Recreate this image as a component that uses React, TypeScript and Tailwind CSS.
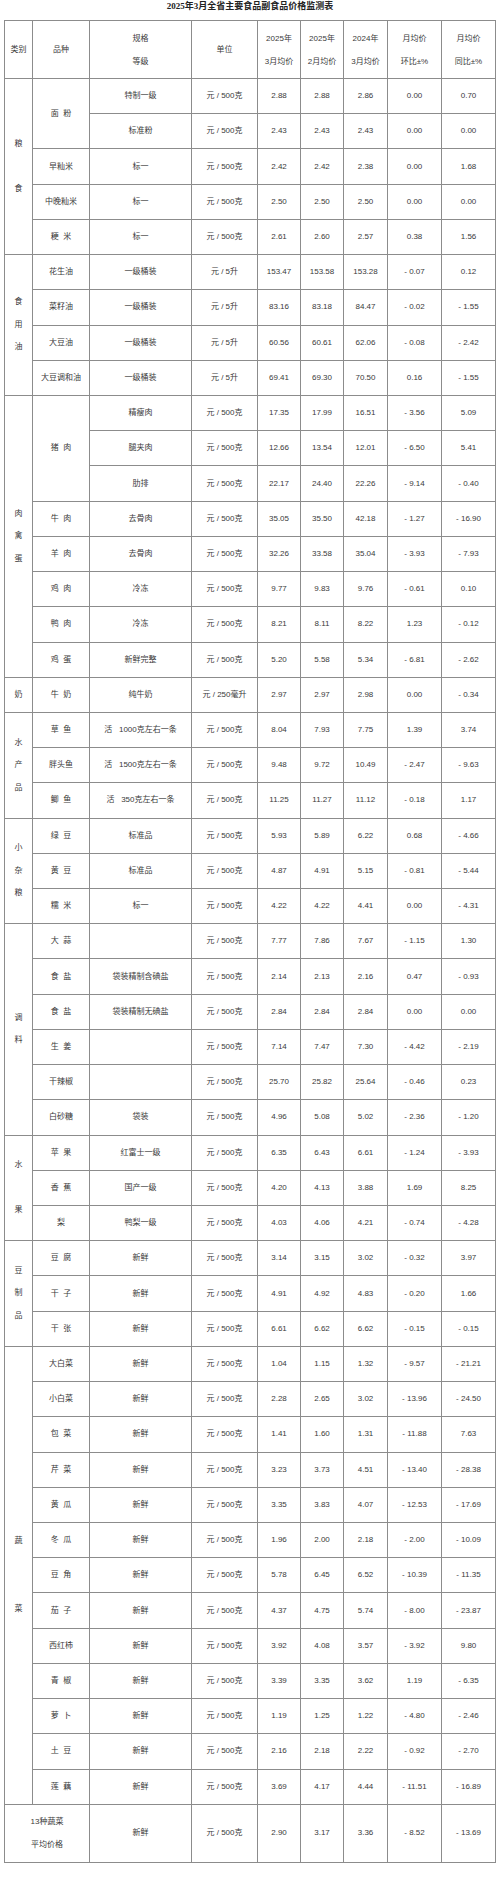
type Row = string[];

interface Item {
  name: string;
  rows: Row[];
}

interface Group {
  cat: string[];
  items: Item[];
}

const U = '元 / 500克';
const OIL = '元 / 5升';

const groups: Group[] = [
  {
    cat: ['粮', '', '食'],
    items: [
      {
        name: '面  粉',
        rows: [
          ['特制一级', U, '2.88', '2.88', '2.86', '0.00', '0.70'],
          ['标准粉', U, '2.43', '2.43', '2.43', '0.00', '0.00'],
        ],
      },
      { name: '早籼米', rows: [['标一', U, '2.42', '2.42', '2.38', '0.00', '1.68']] },
      { name: '中晚籼米', rows: [['标一', U, '2.50', '2.50', '2.50', '0.00', '0.00']] },
      { name: '粳  米', rows: [['标一', U, '2.61', '2.60', '2.57', '0.38', '1.56']] },
    ],
  },
  {
    cat: ['食', '用', '油'],
    items: [
      { name: '花生油', rows: [['一级桶装', OIL, '153.47', '153.58', '153.28', '- 0.07', '0.12']] },
      { name: '菜籽油', rows: [['一级桶装', OIL, '83.16', '83.18', '84.47', '- 0.02', '- 1.55']] },
      { name: '大豆油', rows: [['一级桶装', OIL, '60.56', '60.61', '62.06', '- 0.08', '- 2.42']] },
      { name: '大豆调和油', rows: [['一级桶装', OIL, '69.41', '69.30', '70.50', '0.16', '- 1.55']] },
    ],
  },
  {
    cat: ['肉', '禽', '蛋'],
    items: [
      {
        name: '猪  肉',
        rows: [
          ['精瘦肉', U, '17.35', '17.99', '16.51', '- 3.56', '5.09'],
          ['腿夹肉', U, '12.66', '13.54', '12.01', '- 6.50', '5.41'],
          ['肋排', U, '22.17', '24.40', '22.26', '- 9.14', '- 0.40'],
        ],
      },
      { name: '牛  肉', rows: [['去骨肉', U, '35.05', '35.50', '42.18', '- 1.27', '- 16.90']] },
      { name: '羊  肉', rows: [['去骨肉', U, '32.26', '33.58', '35.04', '- 3.93', '- 7.93']] },
      { name: '鸡  肉', rows: [['冷冻', U, '9.77', '9.83', '9.76', '- 0.61', '0.10']] },
      { name: '鸭  肉', rows: [['冷冻', U, '8.21', '8.11', '8.22', '1.23', '- 0.12']] },
      { name: '鸡  蛋', rows: [['新鲜完整', U, '5.20', '5.58', '5.34', '- 6.81', '- 2.62']] },
    ],
  },
  {
    cat: ['奶'],
    items: [{ name: '牛  奶', rows: [['纯牛奶', '元 / 250毫升', '2.97', '2.97', '2.98', '0.00', '- 0.34']] }],
  },
  {
    cat: ['水', '产', '品'],
    items: [
      { name: '草  鱼', rows: [['活   1000克左右一条', U, '8.04', '7.93', '7.75', '1.39', '3.74']] },
      { name: '胖头鱼', rows: [['活   1500克左右一条', U, '9.48', '9.72', '10.49', '- 2.47', '- 9.63']] },
      { name: '鲫  鱼', rows: [['活   350克左右一条', U, '11.25', '11.27', '11.12', '- 0.18', '1.17']] },
    ],
  },
  {
    cat: ['小', '杂', '粮'],
    items: [
      { name: '绿  豆', rows: [['标准品', U, '5.93', '5.89', '6.22', '0.68', '- 4.66']] },
      { name: '黄  豆', rows: [['标准品', U, '4.87', '4.91', '5.15', '- 0.81', '- 5.44']] },
      { name: '糯  米', rows: [['标一', U, '4.22', '4.22', '4.41', '0.00', '- 4.31']] },
    ],
  },
  {
    cat: ['调', '料'],
    items: [
      { name: '大  蒜', rows: [['', U, '7.77', '7.86', '7.67', '- 1.15', '1.30']] },
      { name: '食  盐', rows: [['袋装精制含碘盐', U, '2.14', '2.13', '2.16', '0.47', '- 0.93']] },
      { name: '食  盐', rows: [['袋装精制无碘盐', U, '2.84', '2.84', '2.84', '0.00', '0.00']] },
      { name: '生  姜', rows: [['', U, '7.14', '7.47', '7.30', '- 4.42', '- 2.19']] },
      { name: '干辣椒', rows: [['', U, '25.70', '25.82', '25.64', '- 0.46', '0.23']] },
      { name: '白砂糖', rows: [['袋装', U, '4.96', '5.08', '5.02', '- 2.36', '- 1.20']] },
    ],
  },
  {
    cat: ['水', '', '果'],
    items: [
      { name: '苹  果', rows: [['红富士一级', U, '6.35', '6.43', '6.61', '- 1.24', '- 3.93']] },
      { name: '香  蕉', rows: [['国产一级', U, '4.20', '4.13', '3.88', '1.69', '8.25']] },
      { name: '梨', rows: [['鸭梨一级', U, '4.03', '4.06', '4.21', '- 0.74', '- 4.28']] },
    ],
  },
  {
    cat: ['豆', '制', '品'],
    items: [
      { name: '豆  腐', rows: [['新鲜', U, '3.14', '3.15', '3.02', '- 0.32', '3.97']] },
      { name: '干  子', rows: [['新鲜', U, '4.91', '4.92', '4.83', '- 0.20', '1.66']] },
      { name: '干  张', rows: [['新鲜', U, '6.61', '6.62', '6.62', '- 0.15', '- 0.15']] },
    ],
  },
  {
    cat: ['蔬', '', '', '菜'],
    items: [
      { name: '大白菜', rows: [['新鲜', U, '1.04', '1.15', '1.32', '- 9.57', '- 21.21']] },
      { name: '小白菜', rows: [['新鲜', U, '2.28', '2.65', '3.02', '- 13.96', '- 24.50']] },
      { name: '包  菜', rows: [['新鲜', U, '1.41', '1.60', '1.31', '- 11.88', '7.63']] },
      { name: '芹  菜', rows: [['新鲜', U, '3.23', '3.73', '4.51', '- 13.40', '- 28.38']] },
      { name: '黄  瓜', rows: [['新鲜', U, '3.35', '3.83', '4.07', '- 12.53', '- 17.69']] },
      { name: '冬  瓜', rows: [['新鲜', U, '1.96', '2.00', '2.18', '- 2.00', '- 10.09']] },
      { name: '豆  角', rows: [['新鲜', U, '5.78', '6.45', '6.52', '- 10.39', '- 11.35']] },
      { name: '茄  子', rows: [['新鲜', U, '4.37', '4.75', '5.74', '- 8.00', '- 23.87']] },
      { name: '西红柿', rows: [['新鲜', U, '3.92', '4.08', '3.57', '- 3.92', '9.80']] },
      { name: '青  椒', rows: [['新鲜', U, '3.39', '3.35', '3.62', '1.19', '- 6.35']] },
      { name: '萝  卜', rows: [['新鲜', U, '1.19', '1.25', '1.22', '- 4.80', '- 2.46']] },
      { name: '土  豆', rows: [['新鲜', U, '2.16', '2.18', '2.22', '- 0.92', '- 2.70']] },
      { name: '莲  藕', rows: [['新鲜', U, '3.69', '4.17', '4.44', '- 11.51', '- 16.89']] },
    ],
  },
];

const cell = 'border border-[#8c8c8c] p-0 text-center align-middle whitespace-pre';

const Vertical = ({ chars }: { chars: string[] }) => (
  <div className="flex flex-col items-center">
    {chars.map((c, i) => (
      <span key={i} className="h-[22.5px] leading-[22.5px]">
        {c}
      </span>
    ))}
  </div>
);

const Stacked = ({ top, bottom }: { top: string; bottom: string }) => (
  <div className="flex flex-col items-center">
    <span className="h-[23px] leading-[23px]">{top}</span>
    <span className="h-[23px] leading-[23px]">{bottom}</span>
  </div>
);

export default function App() {
  return (
    <div className="w-[500px] min-h-[1891px] bg-white font-['Liberation_Sans','Noto_Sans_CJK_SC',sans-serif] text-[#3a3a3a]">
      <div className="h-[20px] text-center text-[9px] leading-[13px] font-bold text-[#222] font-['Liberation_Serif','Noto_Sans_CJK_SC',serif]">
        2025年3月全省主要食品副食品价格监测表
      </div>
      <table className="ml-[4px] w-[491px] table-fixed border-collapse text-[8px]">
        <colgroup>
          <col className="w-[28px]" />
          <col className="w-[57px]" />
          <col className="w-[102px]" />
          <col className="w-[66px]" />
          <col className="w-[43px]" />
          <col className="w-[43px]" />
          <col className="w-[44px]" />
          <col className="w-[54px]" />
          <col className="w-[54px]" />
        </colgroup>
        <thead>
          <tr className="h-[58px]">
            <th className={`${cell} font-normal`}>类别</th>
            <th className={`${cell} font-normal`}>品种</th>
            <th className={`${cell} font-normal`}>
              <Stacked top="规格" bottom="等级" />
            </th>
            <th className={`${cell} font-normal`}>单位</th>
            <th className={`${cell} font-normal`}>
              <Stacked top="2025年" bottom="3月均价" />
            </th>
            <th className={`${cell} font-normal`}>
              <Stacked top="2025年" bottom="2月均价" />
            </th>
            <th className={`${cell} font-normal`}>
              <Stacked top="2024年" bottom="3月均价" />
            </th>
            <th className={`${cell} font-normal`}>
              <Stacked top="月均价" bottom="环比±%" />
            </th>
            <th className={`${cell} font-normal`}>
              <Stacked top="月均价" bottom="同比±%" />
            </th>
          </tr>
        </thead>
        <tbody>
          {groups.map((g, gi) => {
            const total = g.items.reduce((n, it) => n + it.rows.length, 0);
            return g.items.flatMap((it, ii) =>
              it.rows.map((r, ri) => (
                <tr key={`${gi}-${ii}-${ri}`} className="h-[35.23px]">
                  {ii === 0 && ri === 0 && (
                    <td rowSpan={total} className={cell}>
                      <Vertical chars={g.cat} />
                    </td>
                  )}
                  {ri === 0 && (
                    <td rowSpan={it.rows.length} className={cell}>
                      {it.name}
                    </td>
                  )}
                  {r.map((v, vi) => (
                    <td key={vi} className={cell}>
                      {v}
                    </td>
                  ))}
                </tr>
              ))
            );
          })}
          <tr className="h-[58px]">
            <td colSpan={2} className={cell}>
              <Stacked top="13种蔬菜" bottom="平均价格" />
            </td>
            <td className={cell}>新鲜</td>
            <td className={cell}>{U}</td>
            <td className={cell}>2.90</td>
            <td className={cell}>3.17</td>
            <td className={cell}>3.36</td>
            <td className={cell}>- 8.52</td>
            <td className={cell}>- 13.69</td>
          </tr>
        </tbody>
      </table>
    </div>
  );
}
